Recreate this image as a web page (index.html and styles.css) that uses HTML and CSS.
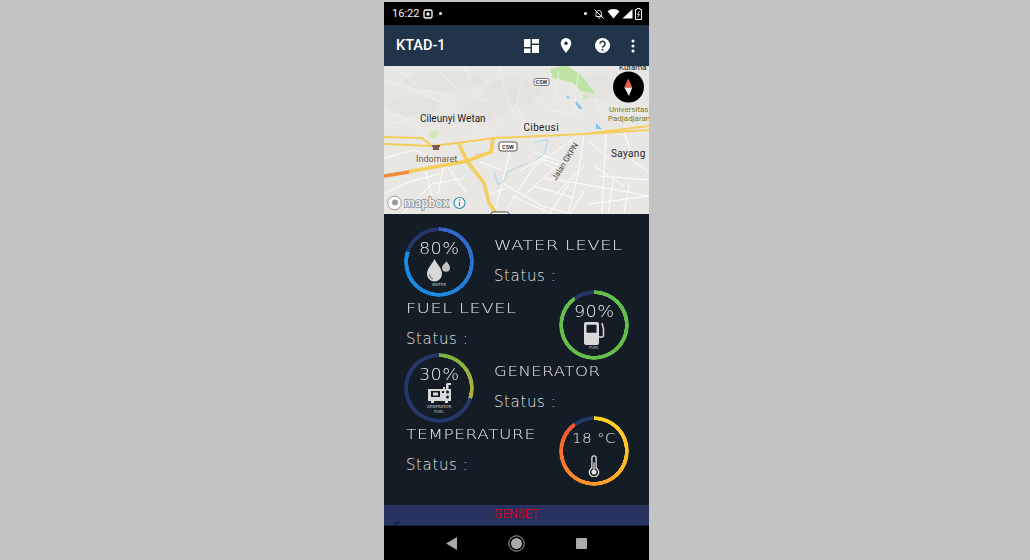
FILE: index.html
```html
<!DOCTYPE html>
<html lang="en">
<head>
<meta charset="utf-8">
<title>KTAD-1</title>
<link rel="stylesheet" href="styles.css">
</head>
<body>
<main class="phone">
  <div class="statusbar">
    <div class="status-left">
      <span class="clock">16:22</span>
      <svg class="st-icon" viewBox="0 0 10 10" width="10" height="10"><rect x="1" y="1" width="8" height="8" rx="1.5" fill="none" stroke="#fff" stroke-width="1.3"/><circle cx="5" cy="5" r="1.7" fill="#fff"/></svg>
      <span class="dot"></span>
    </div>
    <div class="status-right">
      <span class="dot"></span>
      <svg class="st-icon" viewBox="0 0 12 12" width="12" height="12"><path d="M3 8.5V5.5a3 3 0 0 1 5-2.2L9 8.5zM5 10h2" fill="none" stroke="#ddd" stroke-width="1"/><path d="M1.5 1.5l9 9" stroke="#fff" stroke-width="1"/></svg>
      <svg class="st-icon" viewBox="0 0 13 11" width="13" height="11"><path d="M0.5 3.2a9 9 0 0 1 12 0L6.5 10.5z" fill="#fff"/></svg>
      <svg class="st-icon" viewBox="0 0 11 11" width="11" height="11"><path d="M10.5 1v9.5H0.5z" fill="#fff"/></svg>
      <svg class="st-icon" viewBox="0 0 7 12" width="7" height="12"><path d="M2 .5h3v1h1.5v10h-6v-10H2z" fill="none" stroke="#fff" stroke-width="1"/><path d="M4.5 3L2.5 6.5h2l-2 3" fill="none" stroke="#fff" stroke-width=".8"/></svg>
    </div>
  </div>

  <header class="appbar">
    <h1 class="title">KTAD-1</h1>
    <div class="actions">
      <svg class="act act-dash" viewBox="0 0 15 14" width="15" height="14"><path d="M0 0h6.500v8H0zM0 9.500h6.500V14H0zM8 0h7v4.500H8zM8 6h7v8H8z" fill="#fff"/></svg>
      <svg class="act act-pin" viewBox="0 0 12 15" width="12" height="15"><path fill-rule="evenodd" d="M6 0a5.300 5.300 0 0 1 5.300 5.300C11.300 9 6 15 6 15S.7 9 .7 5.300A5.300 5.300 0 0 1 6 0zm0 3.500a1.800 1.800 0 1 0 0 3.600 1.800 1.800 0 0 0 0-3.600z" fill="#fff"/></svg>
      <svg class="act act-help" viewBox="0 0 15 15" width="15" height="15"><circle cx="7.500" cy="7.500" r="7.500" fill="#fff"/><path d="M5 5.800a2.500 2.500 0 1 1 3.900 2c-.9.600-1.400 1-1.400 2" fill="none" stroke="#22344a" stroke-width="1.500"/><circle cx="7.500" cy="11.800" r="1" fill="#22344a"/></svg>
      <svg class="act act-more" viewBox="0 0 4 14" width="4" height="14"><circle cx="2" cy="2" r="1.500" fill="#fff"/><circle cx="2" cy="7" r="1.500" fill="#fff"/><circle cx="2" cy="12" r="1.500" fill="#fff"/></svg>
    </div>
  </header>

  <section class="map">
    <svg class="map-svg" viewBox="0 0 265 148" width="265" height="148">
      <rect width="265" height="148" fill="#e8e7e4"/>
      <g fill="#dfdeda" fill-opacity=".4">
        <ellipse cx="130" cy="25" rx="28" ry="14"/><ellipse cx="60" cy="15" rx="40" ry="10"/><ellipse cx="30" cy="40" rx="25" ry="10"/><ellipse cx="100" cy="45" rx="22" ry="9"/><ellipse cx="215" cy="20" rx="16" ry="12"/>
      </g>
      <path d="M166 3l12-3h6l14 10 9 12 4 6-14-3-8-8-10-3-10-2z" fill="#bfe3a5"/>
      <path d="M199 28l5 0 0 5-5 1zM46 65l9 0-3 7-7 0zM207 29h4v3h-4z" fill="#d4e6b8"/>
      <path d="M192 35l7 8-4 0-4-6zM212 57l6 6-6 0zM182 30l4 1-2 2z" fill="#7fc5ea"/>
      <path d="M92 86l8 2-3 3-7-1z" fill="#ecd6da"/>
      <g fill="none" stroke="#f5f4f2" stroke-width=".7">
        <path d="M0 15l30 8 40 20M10 0l30 25 30 5M50 0l25 25M80 0l15 30 20 25M115 0l10 40 15 15M140 10l-8 30 12 20M150 30l20 15 25 3M175 5l-5 30M0 45l25 8 15 12M0 60l30-8M195 0l-5 45M210 30l10 22M230 40l35 10M250 40l-10 22M75 50l30 18"/>
      </g>
      <g fill="none" stroke="#fff" stroke-width=".9">
        <path d="M0 92l30-8 30 12 22 30M0 128l25-12 30-8M18 148l30-30 32-6M120 148l30-48 30-20 15-12"/>
        <path d="M200 68l-6 40-10 40M160 112l50 8 55 10M222 68l-4 80M240 66l10 30 15 10M128 76l-12 50-6 22M150 86l28 10M155 92l20 7M160 98l20 7M136 105l25-15M120 118l38 22 30 8"/>
        <path d="M140 130l30-28M170 130l30-30M205 75l20 18M210 100l30 20M150 120l40 12M230 110l-6 38M245 118l-5 30M185 118l-20 30M200 125l-14 23M96 96l22 8M40 100l8 30M60 98l-6 30M100 130l22-8M128 130l40 18M205 138l60-8M215 110l50 4M240 90l25 2"/>
      </g>
      <path d="M150 76l14-2-4 14-8 6M110 105l4 14 8-6 0-6 14-7 8-3" fill="none" stroke="#a8d3ea" stroke-width=".9"/>
      <g fill="none" stroke="#f4cd5c" stroke-width="2">
        <path d="M0 71l38 1 10 8M0 78l48 2 25-3 37-5 90-4 65-8M200 68l65-4"/>
      </g>
      <g fill="none" stroke="#f4cd5c" stroke-width="3.500">
        <path d="M109 72l-2 14-24 9-60 11"/>
        <path d="M75 78l8 17 17 22 5 20 8 11"/>
      </g>
      <path d="M0 110l25-4" fill="none" stroke="#f08a3c" stroke-width="3.500"/>
      <path d="M48 79h8v2h-1v3h-6v-3h-1z" fill="#7a5a4a"/>
      <g class="map-label">
        <text class="label-tight" x="36" y="56">Cileunyi Wetan</text>
        <text x="139.500" y="65">Cibeusi</text>
        <text x="227" y="91">Sayang</text>
      </g>
      <text class="map-poi" x="32" y="96">Indomaret</text>
      <g class="map-uni"><text x="225" y="46">Universitas</text><text x="224" y="55">Padjadjaran</text></g>
      <text class="map-top" x="235" y="4">Kutama</text>
      <text class="map-road" transform="translate(172 115) rotate(-58)">Jalan GKPN</text>
      <g class="shield">
        <rect x="150" y="12.500" width="15" height="7" rx="2" fill="#fff" stroke="#555" stroke-width=".8"/>
        <text x="157.500" y="18">CSW</text>
        <rect x="115" y="76" width="18" height="9" rx="2" fill="#fff" stroke="#444" stroke-width=".9"/>
        <text x="124" y="83">CSW</text>
      </g>
      <rect x="107" y="146" width="18" height="5" rx="2" fill="#fff" stroke="#444"/>
      <circle cx="244.500" cy="21" r="15.500" fill="#000"/>
      <path d="M244.300 12.500l4 9h-8z" fill="#f0603c"/>
      <path d="M245 30l-4.700-8.500h8z" fill="#eee"/>
      <circle cx="10.500" cy="137" r="6.800" fill="#fff" stroke="#999" stroke-width="1"/>
      <circle cx="11" cy="136.500" r="3" fill="#9a9a9a"/>
      <text class="mapbox" x="20" y="141">mapbox</text>
      <circle cx="75.500" cy="137" r="5.500" fill="#fff" fill-opacity=".5" stroke="#1e8fb0" stroke-width="1.100"/>
      <path d="M75.500 133.500v1.200M75.500 136v4" stroke="#1e8fb0" stroke-width="1.200"/>
    </svg>
  </section>

  <section class="panel">
    <div class="row row-left">
      <div class="gauge">
        <div class="ring ring-water"></div>
        <span class="pct">80%</span>
        <svg class="g-icon" viewBox="0 0 26 24" width="26" height="24"><path d="M8.500 1c2.500 5.500 7.500 9 7.500 15a7.500 7.500 0 0 1-15 0C1 10 6 6.500 8.500 1z" fill="#d8d8d8"/><path d="M3.500 16a5 5 0 0 0 3.500 5" fill="none" stroke="#666" stroke-width="1"/><path d="M20.500 3c1.200 2.500 3.500 4 3.500 6.800a4 4 0 0 1-8 0C16 7 19.300 5.500 20.500 3z" fill="#bfbfbf"/></svg>
        <span class="g-cap">WATER</span>
      </div>
      <div class="info"><h2 class="name name-wide">WATER LEVEL</h2><p class="state">Status :</p></div>
    </div>
    <div class="row row-right">
      <div class="info"><h2 class="name name-wide">FUEL LEVEL</h2><p class="state">Status :</p></div>
      <div class="gauge">
        <div class="ring ring-fuel"></div>
        <span class="pct">90%</span>
        <svg class="g-icon g-icon-fuel" viewBox="0 0 24 23" width="24" height="23"><path fill-rule="evenodd" d="M1 2a2 2 0 0 1 2-2h11a2 2 0 0 1 2 2v19a2 2 0 0 1-2 2H3a2 2 0 0 1-2-2zm2.500.800v8h10v-8z" fill="#d8d8d8"/><path d="M16 15h3a1.500 1.500 0 0 0 1.500-1.500V7L19 1" fill="none" stroke="#d8d8d8" stroke-width="1.500"/></svg>
        <span class="g-cap g-cap-fuel">FUEL</span>
      </div>
    </div>
    <div class="row row-left">
      <div class="gauge">
        <div class="ring ring-gen"></div>
        <span class="pct">30%</span>
        <svg class="g-icon g-icon-gen" viewBox="0 0 25 22" width="25" height="22"><path fill-rule="evenodd" d="M1 7h15V5h2v2h1V2.500a1.500 1.500 0 0 1 1.500-1.500H24v2h-2.500v4H24v12h-3v2h-3v-2H7v2H4v-2H1zm3 2v6h9V9zm2 1.500h5v3H6zM15 9v2h2V9zm4 1a1.500 1.500 0 1 0 3 0 1.500 1.500 0 0 0-3 0zm0 5a1.500 1.500 0 1 0 3 0 1.500 1.500 0 0 0-3 0z" fill="#d8d8d8"/></svg>
        <span class="g-cap g-cap-two">GENERATOR<br>FUEL</span>
      </div>
      <div class="info"><h2 class="name name-gen">GENERATOR</h2><p class="state">Status :</p></div>
    </div>
    <div class="row row-right">
      <div class="info"><h2 class="name name-temp">TEMPERATURE</h2><p class="state">Status :</p></div>
      <div class="gauge">
        <div class="ring ring-temp"></div>
        <span class="pct pct-temp">18 °C</span>
        <svg class="g-icon g-icon-temp" viewBox="0 0 14 26" width="12" height="22"><path d="M4.500 15.500V3.500a2.500 2.500 0 0 1 5 0v12a5.500 5.500 0 1 1-5 0z" fill="none" stroke="#e4e4e4" stroke-width="1.500"/><circle cx="7" cy="20" r="3" fill="#e4e4e4"/><path d="M7 9v10" stroke="#e4e4e4" stroke-width="1.500"/></svg>
      </div>
    </div>
  </section>

  <div class="genset">GENSET<span class="peek"></span></div>

  <nav class="navbar">
    <svg viewBox="0 0 11 13" width="11" height="13"><path d="M11 0v13L0 6.500z" fill="#aaa"/></svg>
    <svg viewBox="0 0 17 17" width="17" height="17"><circle cx="8.500" cy="8.500" r="7.700" fill="none" stroke="#aaa" stroke-width="1"/><circle cx="8.500" cy="8.500" r="5.500" fill="#aaa"/></svg>
    <svg viewBox="0 0 11 11" width="11" height="11"><rect width="11" height="11" rx="1" fill="#aaa"/></svg>
  </nav>
</main>
</body>
</html>
```

FILE: styles.css
```css
* { box-sizing: border-box; }
html, body { margin: 0; height: 100%; }
body {
  background: #c3c3c3;
  display: flex;
  justify-content: center;
  font-family: "Roboto", "Liberation Sans", sans-serif;
  overflow: hidden;
}
.phone {
  width: 265px;
  height: 560px;
  margin-left: 3px;
  padding-top: 2px;
  display: flex;
  flex-direction: column;
}
.statusbar {
  height: 23px;
  background: #000;
  color: #fff;
  display: flex;
  justify-content: space-between;
  align-items: center;
  padding: 0 7px 0 8px;
  flex: none;
}
.status-left, .status-right { display: flex; align-items: center; }
.status-left { gap: 4px; }
.status-right { gap: 2px; }
.clock { font-size: 11px; color: #f0f0f0; }
.dot { width: 3px; height: 3px; border-radius: 50%; background: #fff; margin: 0 4px 0 2px; }
.st-icon { display: block; }
.appbar {
  height: 41px;
  flex: none;
  background: #22344a;
  display: flex;
  align-items: center;
  justify-content: space-between;
  padding: 0 12px;
}
.title { margin: 0; font-size: 14.500px; font-weight: 500; color: #fff; }
.actions { display: flex; align-items: center; }
.act { display: block; }
.act-pin { margin-left: 21px; }
.act-help { margin-left: 23px; }
.act-more { margin-left: 21px; margin-right: 2px; }
.map { height: 148px; flex: none; overflow: hidden; background: #e8e7e4; }
.map-svg { display: block; }
.map-label text { font: 400 10px "Roboto", sans-serif; fill: #1d1d1d; letter-spacing: .35px; }
.map-label .label-tight { letter-spacing: 0; }
.map-poi { font: 9px "Roboto", sans-serif; fill: #6e5a50; }
.map-uni text { font: 8px "Roboto", sans-serif; fill: #7b7a22; }
.map-top { font: 8px "Roboto", sans-serif; fill: #222; }
.map-road { font: 8px "Roboto", sans-serif; fill: #444; }
.shield text { font: 700 5.500px "Roboto", sans-serif; fill: #333; text-anchor: middle; }
.mapbox { font: 500 12px "Roboto", sans-serif; fill: #f2f2f2; stroke: #8a8a8a; stroke-width: 1.500px; paint-order: stroke; letter-spacing: .3px; }
.panel {
  height: 291px;
  flex: none;
  background: #141c26;
  padding: 13px 20px 0;
  color: #d6d6d6;
  font-family: "DejaVu Sans", sans-serif;
}
.row {
  height: 63px;
  display: flex;
  justify-content: space-between;
}
.row-left .info { width: 135px; padding-top: 10px; }
.row-right .info { padding: 10px 0 0 2px; }
.name {
  margin: 0;
  font-size: 14.500px;
  font-weight: 200;
  line-height: 17px;
  letter-spacing: .5px;
  white-space: nowrap;
  color: #ececec;
  transform-origin: left center;
}
.name-wide { transform: scaleX(1.225); }
.name-gen { transform: scaleX(1.14); }
.name-temp { transform: scaleX(1.17); }
.state {
  margin: 14px 0 0;
  font-size: 15px;
  font-weight: 200;
  line-height: 17px;
  letter-spacing: .6px;
  color: #e6e6e6;
}
.gauge {
  position: relative;
  width: 70px;
  height: 70px;
  flex: none;
  display: flex;
  flex-direction: column;
  align-items: center;
  padding-top: 15px;
}
.ring {
  position: absolute;
  inset: 0;
  border-radius: 50%;
  -webkit-mask: radial-gradient(closest-side, transparent 30.600px, #000 31px);
  mask: radial-gradient(closest-side, transparent 30.600px, #000 31px);
}
.ring-water { background: conic-gradient(#3463c4 0deg, #2f72d0 90deg, #1a8ae2 180deg, #168fe6 288deg, #25376b 288deg, #25376b 360deg); }
.ring-fuel { background: conic-gradient(#65be4b 0deg 324deg, #25376b 324deg 360deg); }
.ring-gen { background: conic-gradient(#6fb440 0deg, #b2ae3a 108deg, #25376b 108deg 360deg); }
.ring-temp { background: conic-gradient(#ffd420 0deg, #ffc226 90deg, #ff9a2a 180deg, #f4562e 324deg, #25376b 324deg 360deg); }
.pct {
  font-size: 15px;
  font-weight: 200;
  line-height: 15px;
  letter-spacing: .3px;
  color: #ececec;
  transform: scaleX(1.18);
}
.pct-temp { font-size: 14.500px; transform: scaleX(1.05); }
.g-icon { display: block; margin-top: 1px; }
.g-icon-fuel { margin-left: 2px; margin-top: 2px; }
.g-icon-gen { margin-top: -1px; }
.g-icon-temp { margin-top: 9px; }
.g-cap {
  font-size: 4px;
  line-height: 4.500px;
  margin-top: 1px;
  color: #c8c8c8;
  text-align: center;
  font-family: "DejaVu Sans", sans-serif;
}
.g-cap-two { margin-top: 1px; }
.g-cap-fuel { margin-top: 1px; }
.genset {
  position: relative;
  height: 21px;
  flex: none;
  overflow: hidden;
  background: #27325f;
  color: #d0011b;
  font-size: 12px;
  text-align: center;
  line-height: 18px;
  border-bottom: 1px solid #1a2140;
}
.peek {
  position: absolute;
  left: 11px;
  top: 17px;
  width: 5px;
  height: 4px;
  border-left: 1px solid #141c26;
  border-top: 1px solid #141c26;
}
.navbar {
  flex: 1;
  background: #000;
  display: flex;
  align-items: center;
  justify-content: center;
  gap: 51px;
}
```
